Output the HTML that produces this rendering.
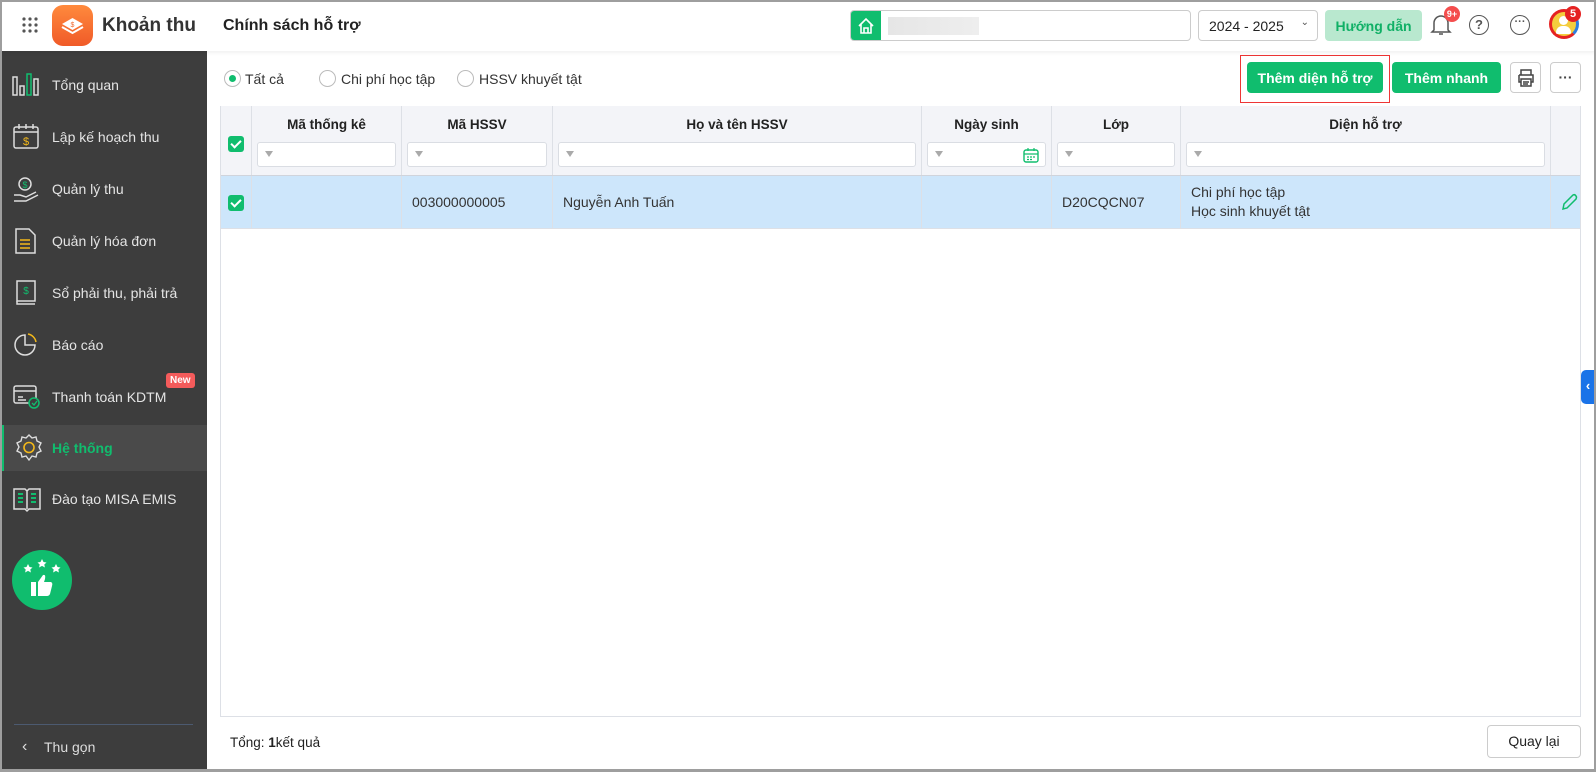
<!DOCTYPE html>
<html><head><meta charset="utf-8"><style>
*{box-sizing:border-box;margin:0;padding:0}
body{width:1596px;height:772px;overflow:hidden;background:#fff;font-family:"Liberation Sans",sans-serif;color:#222;position:relative}
.frame{position:absolute;inset:0;border:2px solid #9e9e9e;border-bottom-width:3px;border-right-width:2px;z-index:50;pointer-events:none}
.abs{position:absolute}
.top{position:absolute;left:0;top:0;width:1596px;height:51px;background:#fff;box-shadow:0 2px 4px rgba(0,0,0,.06);z-index:5}
.side{position:absolute;left:0;top:51px;width:207px;height:721px;background:#3d3d3d}
.item{position:absolute;left:0;width:207px;height:44px;display:flex;align-items:center;color:#e4e4e4;font-size:14px}
.item span{position:absolute;left:52px}
.item svg{position:absolute;left:12px}
.btn{position:absolute;background:#10bd6e;color:#fff;border-radius:4px;font-size:14px;font-weight:bold;display:flex;align-items:center;justify-content:center}
.th{position:absolute;top:106px;height:69px;background:#f3f4f8;border-right:1px solid #dde0e6;font-weight:bold;font-size:13.5px;text-align:center;padding-top:11px}
.flt{position:absolute;top:36px;left:5px;right:5px;height:25px;background:#fff;border:1px solid #dadde3;border-radius:3px}
.flt:before{content:"";position:absolute;left:7px;top:8px;width:0;height:0;border-left:4px solid transparent;border-right:4px solid transparent;border-top:6px solid #aaa}
.td{position:absolute;top:176px;height:52px;border-right:1px solid #dde0e6;font-size:14px;color:#333;display:flex;align-items:center;padding-left:10px}
.chk{position:absolute;width:16px;height:16px;background:#10bd6e;border-radius:3px}
.chk:after{content:"";position:absolute;left:5px;top:2px;width:4px;height:8px;border:solid #fff;border-width:0 2px 2px 0;transform:rotate(45deg)}
.radio{position:absolute;top:70px;width:17px;height:17px;border:1px solid #bbb;border-radius:50%}
.rl{position:absolute;top:71px;font-size:14px;color:#333}
</style></head><body>
<div class="frame"></div>
<div class="top">
  <svg class="abs" style="left:22px;top:17px" width="16" height="16"><g fill="#555"><circle cx="2" cy="2" r="1.6"/><circle cx="8" cy="2" r="1.6"/><circle cx="14" cy="2" r="1.6"/><circle cx="2" cy="8" r="1.6"/><circle cx="8" cy="8" r="1.6"/><circle cx="14" cy="8" r="1.6"/><circle cx="2" cy="14" r="1.6"/><circle cx="8" cy="14" r="1.6"/><circle cx="14" cy="14" r="1.6"/></g></svg>
  <div class="abs" style="left:52px;top:5px;width:41px;height:41px;border-radius:11px;background:linear-gradient(#ff8a3d,#f05a28)"></div>
  <svg class="abs" style="left:60px;top:16px" width="25" height="20"><path d="M12.5 2 L23 8 L12.5 14 L2 8Z" fill="#fff"/><path d="M2 11 L12.5 17 L23 11" stroke="#fff" stroke-width="2" fill="none"/><text x="12.5" y="11" font-size="7" fill="#f06a30" text-anchor="middle" font-family="Liberation Sans">$</text></svg>
  <div class="abs" style="left:102px;top:15px;font-size:19px;font-weight:bold;color:#333">Khoản thu</div>
  <div class="abs" style="left:223px;top:17px;font-size:16px;font-weight:bold;color:#222">Chính sách hỗ trợ</div>
  <div class="abs" style="left:850px;top:10px;width:341px;height:31px;border:1px solid #ccc;border-radius:4px;overflow:hidden">
    <div class="abs" style="left:0;top:0;width:30px;height:31px;background:#10bd6e"></div>
    <svg class="abs" style="left:6px;top:6px" width="18" height="18"><path d="M2 9 L9 2 L16 9 M4 7 V16 H14 V7 M7 16 V11 H11 V16" stroke="#fff" stroke-width="1.6" fill="none"/></svg>
    <div class="abs" style="left:37px;top:6px;width:91px;height:18px;background:linear-gradient(90deg,#e6e6e6,#eee)"></div>
  </div>
  <div class="abs" style="left:1198px;top:10px;width:120px;height:31px;border:1px solid #ccc;border-radius:4px;font-size:14px;padding:7px 0 0 10px">2024 - 2025<span style="position:absolute;right:8px;top:6px;font-size:10px;color:#555">&#8964;</span></div>
  <div class="abs" style="left:1325px;top:10px;width:97px;height:31px;background:#b9e8cf;border-radius:4px;color:#10b066;font-weight:bold;font-size:14px;text-align:center;padding-top:8px">Hướng dẫn</div>
  <svg class="abs" style="left:1430px;top:13px" width="22" height="24"><path d="M4 17 V10 A7 7 0 0 1 18 10 V17 L20 19 H2 Z M9 21 H13" stroke="#555" stroke-width="1.5" fill="none"/></svg>
  <div class="abs" style="left:1444px;top:6px;width:16px;height:16px;border-radius:50%;background:#f44d4d;color:#fff;font-size:9px;font-weight:bold;text-align:center;line-height:16px">9+</div>
  <div class="abs" style="left:1469px;top:15px;width:20px;height:20px;border:1.6px solid #555;border-radius:50%;font-size:13px;text-align:center;line-height:17px;color:#555;font-weight:bold">?</div>
  <div class="abs" style="left:1510px;top:15px;width:20px;height:20px;border:1.6px solid #555;border-radius:50%;font-size:11px;text-align:center;line-height:12px;color:#555;font-weight:bold">···</div>
  <div class="abs" style="left:1549px;top:9px;width:30px;height:30px;border-radius:50%;border:3px solid #e52222;border-right-color:#2d7de0;background:#f4cd3d"></div>
  <div class="abs" style="left:1559px;top:16px;width:9px;height:9px;border-radius:50%;background:#fff"></div>
  <div class="abs" style="left:1556px;top:26px;width:15px;height:8px;border-radius:8px 8px 2px 2px;background:#fff"></div>
  <div class="abs" style="left:1565px;top:6px;width:16px;height:16px;border-radius:50%;background:#e52222;color:#fff;font-size:11px;font-weight:bold;text-align:center;line-height:16px">5</div>
</div>

<div class="side">
  <div class="item" style="top:12px"><svg width="28" height="24"><g stroke="#ddd" stroke-width="1.5" fill="none"><rect x="1" y="4" width="4" height="18"/><rect x="8" y="13" width="4" height="9"/><rect x="22" y="6" width="4" height="16"/></g><rect x="15" y="1" width="4" height="21" stroke="#10bd6e" stroke-width="1.5" fill="none"/></svg><span>Tổng quan</span></div>
  <div class="item" style="top:64px"><svg width="28" height="28"><rect x="2" y="4" width="24" height="21" rx="2" stroke="#ddd" stroke-width="1.5" fill="none"/><path d="M2 9 H26 M7 1 V6 M14 1 V6 M21 1 V6" stroke="#ddd" stroke-width="1.5"/><text x="14" y="22" font-size="11" fill="#f3b81a" text-anchor="middle" font-family="Liberation Sans">$</text></svg><span>Lập kế hoạch thu</span></div>
  <div class="item" style="top:116px"><svg width="28" height="28"><circle cx="13" cy="9" r="6" stroke="#ddd" stroke-width="1.5" fill="none"/><text x="13" y="13" font-size="9" fill="#10bd6e" text-anchor="middle">$</text><path d="M2 20 H8 L14 22 L24 17 M2 26 H14 L26 20" stroke="#ddd" stroke-width="1.5" fill="none"/></svg><span>Quản lý thu</span></div>
  <div class="item" style="top:168px"><svg width="28" height="28"><path d="M4 2 H17 L23 8 V26 H4 Z" stroke="#ddd" stroke-width="1.5" fill="none"/><path d="M8 13 H18 M8 17 H18 M8 21 H18" stroke="#f3b81a" stroke-width="1.5"/></svg><span>Quản lý hóa đơn</span></div>
  <div class="item" style="top:220px"><svg width="28" height="28"><rect x="5" y="2" width="18" height="20" stroke="#ddd" stroke-width="1.5" fill="none"/><path d="M5 22 V25 H23" stroke="#ddd" stroke-width="1.5" fill="none"/><text x="14" y="15" font-size="10" fill="#10bd6e" text-anchor="middle">$</text></svg><span>Sổ phải thu, phải trả</span></div>
  <div class="item" style="top:272px"><svg width="28" height="28"><path d="M13 4 A10 10 0 1 0 23 14 H13 Z" stroke="#ddd" stroke-width="1.5" fill="none"/><path d="M16 3 A10 10 0 0 1 24 11" stroke="#f3b81a" stroke-width="1.5" fill="none"/></svg><span>Báo cáo</span></div>
  <div class="item" style="top:324px"><svg width="30" height="28"><rect x="2" y="3" width="22" height="17" rx="2" stroke="#ddd" stroke-width="1.5" fill="none"/><path d="M2 8 H24 M6 14 H11 M6 17 H14" stroke="#ddd" stroke-width="1.5"/><circle cx="22" cy="20" r="5" stroke="#10bd6e" stroke-width="1.5" fill="#3d3d3d"/><path d="M20 20 L22 22 L25 18" stroke="#10bd6e" stroke-width="1.3" fill="none"/></svg><span>Thanh toán KDTM</span></div>
  <div class="abs" style="left:166px;top:322px;background:#f45b5b;color:#fff;font-size:10px;font-weight:bold;padding:2px 4px;border-radius:3px">New</div>
  <div class="item" style="top:374px;height:46px;background:#4a4a4a;border-left:4px solid #10bd6e"><svg width="30" height="30" style="left:10px"><path d="M15 2 L18 5 L22 4 L23 8 L27 10 L25 14 L27 18 L23 20 L22 24 L18 23 L15 27 L12 23 L8 24 L7 20 L3 18 L5 14 L3 10 L7 8 L8 4 L12 5Z" stroke="#ddd" stroke-width="1.4" fill="none"/><circle cx="15" cy="14.5" r="5" stroke="#f3b81a" stroke-width="1.6" fill="none"/></svg><span style="left:48px;color:#10bd6e;font-weight:bold">Hệ thống</span></div>
  <div class="item" style="top:426px"><svg width="30" height="28"><path d="M2 4 H13 L15 6 L17 4 H28 V24 H17 L15 26 L13 24 H2 Z M15 6 V24" stroke="#ddd" stroke-width="1.5" fill="none"/><path d="M6 9 H11 M6 13 H11 M6 17 H11 M19 9 H24 M19 13 H24 M19 17 H24" stroke="#10bd6e" stroke-width="2"/></svg><span>Đào tạo MISA EMIS</span></div>
  <div class="abs" style="left:12px;top:499px;width:60px;height:60px;border-radius:50%;background:#10bd6e"></div>
  <svg class="abs" style="left:22px;top:507px" width="40" height="42"><g fill="#fff"><path d="M6 6 l1.5 3 3 .5-2.2 2 .6 3-2.9-1.6-2.9 1.6.6-3-2.2-2 3-.5z"/><path d="M20 1 l1.5 3 3 .5-2.2 2 .6 3-2.9-1.6-2.9 1.6.6-3-2.2-2 3-.5z"/><path d="M34 6 l1.5 3 3 .5-2.2 2 .6 3-2.9-1.6-2.9 1.6.6-3-2.2-2 3-.5z"/><rect x="9" y="24" width="5" height="14"/><path d="M16 24 L21 17 Q24 16 23 21 L22 24 H29 Q31 25 30 28 L28 36 Q27 38 25 38 H16Z"/></g></svg>
  <div class="abs" style="left:14px;top:673px;width:179px;height:1px;background:#4c5a70"></div>
  <div class="abs" style="left:22px;top:687px;color:#ddd;font-size:16px">&#8249;</div>
  <div class="abs" style="left:44px;top:688px;color:#ddd;font-size:14px">Thu gọn</div>
</div>

<div class="radio" style="left:224px;"></div><div class="abs" style="left:229px;top:75px;width:7px;height:7px;border-radius:50%;background:#10bd6e"></div>
<div class="rl" style="left:245px">Tất cả</div>
<div class="radio" style="left:319px"></div><div class="rl" style="left:341px">Chi phí học tập</div>
<div class="radio" style="left:457px"></div><div class="rl" style="left:479px">HSSV khuyết tật</div>

<div class="abs" style="left:1240px;top:55px;width:150px;height:48px;border:1.5px solid #ee3535"></div>
<div class="btn" style="left:1247px;top:62px;width:136px;height:31px">Thêm diện hỗ trợ</div>
<div class="btn" style="left:1392px;top:62px;width:109px;height:31px">Thêm nhanh</div>
<div class="abs" style="left:1510px;top:62px;width:31px;height:31px;border:1px solid #ccc;border-radius:4px"></div>
<svg class="abs" style="left:1516px;top:68px" width="20" height="20"><path d="M5 7 V2 H15 V7 M3 7 H17 V14 H15 M5 14 H3 V7 M5 11 H15 V18 H5 Z M7 14 H13 M7 16 H12" stroke="#444" stroke-width="1.5" fill="none"/></svg>
<div class="abs" style="left:1550px;top:62px;width:31px;height:31px;border:1px solid #ccc;border-radius:4px;text-align:center;font-weight:bold;font-size:14px;line-height:29px;color:#444">···</div>

<div class="abs" style="left:220px;top:106px;width:1361px;height:611px;border:1px solid #dde0e6"></div>
<div class="th" style="left:221px;width:31px"></div>
<div class="chk" style="left:228px;top:136px"></div>
<div class="th" style="left:252px;width:150px">Mã thống kê<div class="flt"></div></div>
<div class="th" style="left:402px;width:151px">Mã HSSV<div class="flt"></div></div>
<div class="th" style="left:553px;width:369px">Họ và tên HSSV<div class="flt"></div></div>
<div class="th" style="left:922px;width:130px">Ngày sinh<div class="flt"><svg style="position:absolute;right:6px;top:4px" width="16" height="16"><rect x="1" y="3" width="14" height="12" rx="2" stroke="#10bd6e" stroke-width="1.4" fill="none"/><path d="M1 7 H15 M5 1 V4 M11 1 V4 M4 10 H6 M7 10 H9 M10 10 H12 M4 12.5 H6 M7 12.5 H9" stroke="#10bd6e" stroke-width="1.2"/></svg></div></div>
<div class="th" style="left:1052px;width:129px">Lớp<div class="flt"></div></div>
<div class="th" style="left:1181px;width:370px">Diện hỗ trợ<div class="flt"></div></div>
<div class="th" style="left:1551px;width:29px;border-right:none"></div>
<div class="abs" style="left:221px;top:175px;width:1359px;height:1px;background:#d0d4dc"></div>
<div class="abs" style="left:221px;top:176px;width:1359px;height:52px;background:#cde6fb"></div>
<div class="abs" style="left:221px;top:228px;width:1359px;height:1px;background:#dde0e6"></div>
<div class="td" style="left:221px;width:31px"></div>
<div class="chk" style="left:228px;top:195px"></div>
<div class="td" style="left:252px;width:150px"></div>
<div class="td" style="left:402px;width:151px">003000000005</div>
<div class="td" style="left:553px;width:369px">Nguyễn Anh Tuấn</div>
<div class="td" style="left:922px;width:130px"></div>
<div class="td" style="left:1052px;width:129px">D20CQCN07</div>
<div class="td" style="left:1181px;width:370px;line-height:19px">Chi phí học tập<br>Học sinh khuyết tật</div>
<svg class="abs" style="left:1560px;top:193px" width="18" height="18"><path d="M3 16 L4 11 L13 2 Q15 1 16 3 Q17 4 16 6 L7 15 Z" stroke="#10bd6e" stroke-width="1.5" fill="none"/></svg>

<div class="abs" style="left:1581px;top:370px;width:14px;height:34px;background:#1a73e8;border-radius:5px 0 0 5px;color:#fff;font-weight:bold;font-size:13px;text-align:center;line-height:32px">&#8249;</div>

<div class="abs" style="left:230px;top:735px;font-size:13.5px"><span>Tổng: </span><b>1</b>kết quả</div>
<div class="abs" style="left:1487px;top:725px;width:94px;height:33px;border:1px solid #ccc;border-radius:4px;font-size:14px;text-align:center;line-height:31px">Quay lại</div>
</body></html>
